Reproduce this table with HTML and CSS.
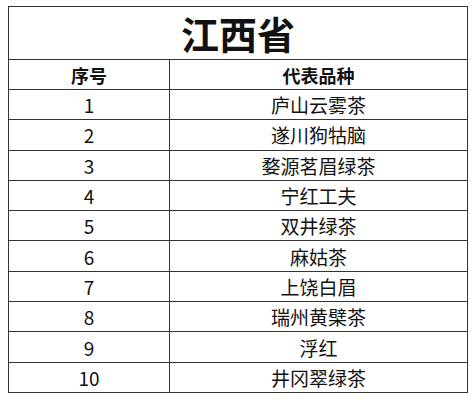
FILE: index.html
```html
<!DOCTYPE html>
<html lang="zh">
<head>
<meta charset="utf-8">
<link rel="stylesheet" href="styles.css">
</head>
<body>
<table class="tea">
  <colgroup><col class="c1"><col class="c2"></colgroup>
  <tr class="title"><th colspan="2">江西省</th></tr>
  <tr class="head"><th>序号</th><th>代表品种</th></tr>
  <tr class="row"><td>1</td><td>庐山云雾茶</td></tr>
  <tr class="row"><td>2</td><td>遂川狗牯脑</td></tr>
  <tr class="row"><td>3</td><td>婺源茗眉绿茶</td></tr>
  <tr class="row"><td>4</td><td>宁红工夫</td></tr>
  <tr class="row"><td>5</td><td>双井绿茶</td></tr>
  <tr class="row"><td>6</td><td>麻姑茶</td></tr>
  <tr class="row"><td>7</td><td>上饶白眉</td></tr>
  <tr class="row"><td>8</td><td>瑞州黄檗茶</td></tr>
  <tr class="row"><td>9</td><td>浮红</td></tr>
  <tr class="row"><td>10</td><td>井冈翠绿茶</td></tr>
</table>
</body>
</html>
```
FILE: styles.css
```css
html, body {
  margin: 0;
  padding: 0;
  background: #ffffff;
}
body {
  padding: 6px 0 0 8px;
  font-family: "Noto Sans CJK SC", "Noto Sans", sans-serif;
  color: #111;
}
.tea {
  border-collapse: collapse;
  width: 459px;
  table-layout: fixed;
}
.c1 { width: 161px; }
.c2 { width: 298px; }
.tea th, .tea td {
  border: 1px solid #333;
  padding: 0;
  text-align: center;
  vertical-align: middle;
  line-height: 1;
}
.title th {
  height: 52px;
  font-size: 38px;
  font-weight: 700;
}
.head th {
  height: 29px;
  font-size: 18px;
  font-weight: 700;
}
.row td {
  height: 29.3px;
  font-size: 19px;
  font-weight: 400;
}
```
